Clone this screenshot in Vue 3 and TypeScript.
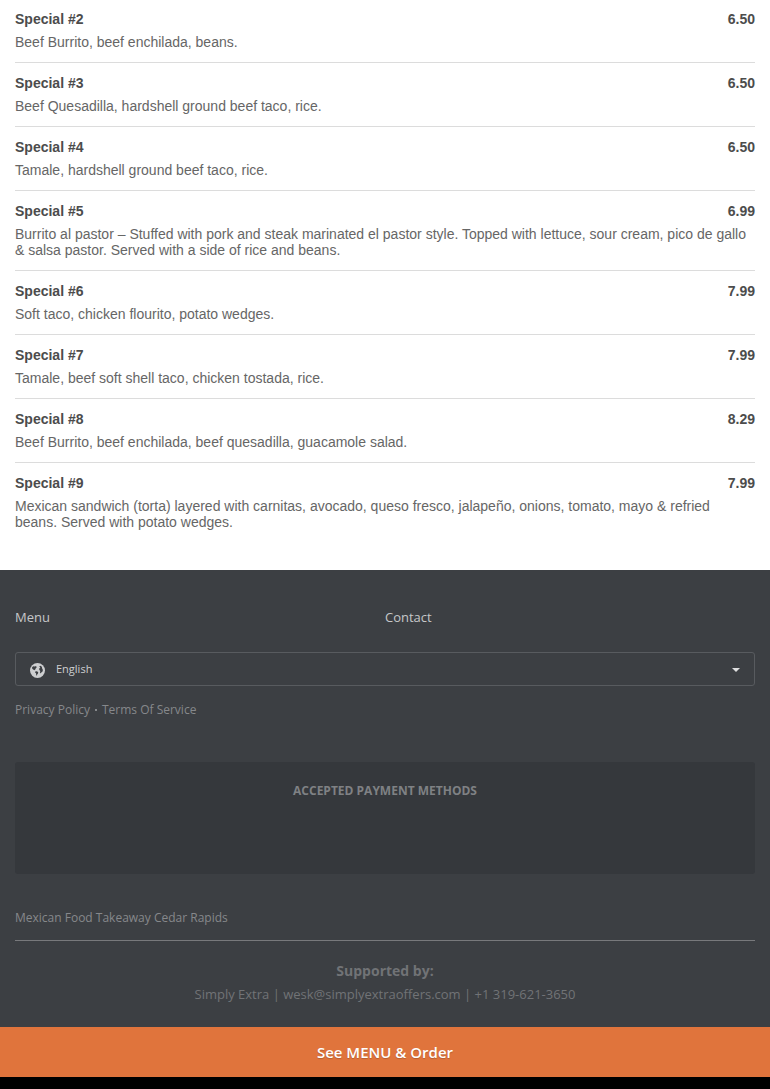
<script setup lang="ts">
import { ref } from 'vue'

interface Dish {
  name: string
  price: string
  description: string
}

const dishes: Dish[] = [
  { name: 'Special #2', price: '6.50', description: 'Beef Burrito, beef enchilada, beans.' },
  { name: 'Special #3', price: '6.50', description: 'Beef Quesadilla, hardshell ground beef taco, rice.' },
  { name: 'Special #4', price: '6.50', description: 'Tamale, hardshell ground beef taco, rice.' },
  {
    name: 'Special #5',
    price: '6.99',
    description:
      'Burrito al pastor – Stuffed with pork and steak marinated el pastor style. Topped with lettuce, sour cream, pico de gallo & salsa pastor. Served with a side of rice and beans.',
  },
  { name: 'Special #6', price: '7.99', description: 'Soft taco, chicken flourito, potato wedges.' },
  { name: 'Special #7', price: '7.99', description: 'Tamale, beef soft shell taco, chicken tostada, rice.' },
  { name: 'Special #8', price: '8.29', description: 'Beef Burrito, beef enchilada, beef quesadilla, guacamole salad.' },
  {
    name: 'Special #9',
    price: '7.99',
    description:
      'Mexican sandwich (torta) layered with carnitas, avocado, queso fresco, jalapeño, onions, tomato, mayo & refried beans. Served with potato wedges.',
  },
]

const language = ref('English')
</script>

<template>
  <div class="page">
    <main>
      <ul class="dishes">
        <li v-for="dish in dishes" :key="dish.name" class="dish">
          <div class="heading">
            <h3>{{ dish.name }}</h3>
            <span class="price">{{ dish.price }}</span>
          </div>
          <p>{{ dish.description }}</p>
        </li>
      </ul>
    </main>

    <footer class="footer">
      <nav class="nav">
        <a href="#menu">Menu</a>
        <a href="#contact">Contact</a>
      </nav>

      <div class="language">
        <svg class="globe" viewBox="0 0 16 16" aria-hidden="true">
          <circle cx="8" cy="8" r="8" fill="#cdced0" />
          <path
            d="M2.2 4.6 3.6 3.4 5.2 3.8 6.4 3.2 7.2 4.4 6.2 5.6 5.6 6.8 4.6 7.6 3.4 6.8 2.4 6ZM5.6 9 7.4 8.8 8.8 9.8 8.4 11.4 7.6 12.2 7.4 13.8 6.6 12.4 6.4 10.8 5.4 10.2ZM9.8 3.4 11.2 2.8 12.6 4 13 5.8 13.8 7.4 13.2 9.2 12 10.2 11.2 11.2 10.6 9.8 11 8.4 9.8 7.2 10 5.6 11 4.8Z"
            fill="#3c3f43"
          />
        </svg>
        <select v-model="language" aria-label="Language">
          <option>English</option>
        </select>
        <span class="caret"></span>
      </div>

      <div class="legal">
        <a href="#privacy">Privacy Policy</a>
        <span class="dot"></span>
        <a href="#terms">Terms Of Service</a>
      </div>

      <section class="payments">
        <h4>ACCEPTED PAYMENT METHODS</h4>
      </section>

      <p class="tagline">Mexican Food Takeaway Cedar Rapids</p>

      <section class="support">
        <h4>Supported by:</h4>
        <p>Simply Extra | wesk@simplyextraoffers.com | +1 319-621-3650</p>
      </section>
    </footer>

    <button type="button" class="order">See MENU &amp; Order</button>
  </div>
</template>

<style>
body {
  margin: 0;
  background: #000;
}
</style>

<style scoped>
.page {
  padding-bottom: 12px;
  background: #000;
  font-family: 'Open Sans', sans-serif;
}

h3,
h4,
p {
  margin: 0;
}

a {
  color: inherit;
  text-decoration: none;
}

main {
  padding: 0 15px 28px;
  background: #fff;
  color: #666;
  font: 14px/16px 'Liberation Sans', Arial, sans-serif;
}

.dishes {
  margin: 0;
  padding: 0;
  list-style: none;
}

.dish {
  padding: 12px 0;
}

.dish:first-child {
  padding-top: 11px;
}

.dish + .dish {
  border-top: 1px solid #dcdcdc;
}

.heading {
  display: flex;
  justify-content: space-between;
  margin-bottom: 7px;
  color: #4c4c4c;
  font-weight: bold;
}

.heading h3 {
  font-size: 14px;
}

.footer {
  padding: 37px 15px 20px;
  background: #3c3f43;
  color: #86888b;
  font-size: 12px;
  line-height: 20px;
}

.nav {
  display: grid;
  grid-template-columns: 1fr 1fr;
  color: #c6c7c9;
  font-size: 13px;
}

.language {
  position: relative;
  display: flex;
  align-items: center;
  margin-top: 25px;
}

.language select {
  width: 100%;
  height: 34px;
  padding: 0 40px;
  border: 1px solid #585b5f;
  border-radius: 3px;
  appearance: none;
  background: transparent;
  color: #cdced0;
  font: 11px/16px 'Open Sans', sans-serif;
}

.globe {
  position: absolute;
  left: 15px;
  top: 11px;
  width: 15px;
  height: 15px;
  pointer-events: none;
}

.caret {
  position: absolute;
  right: 15px;
  top: 16px;
  border: 4px solid transparent;
  border-top-color: #dedfe0;
  border-bottom: 0;
  pointer-events: none;
}

.legal {
  display: flex;
  align-items: center;
  margin-top: 14px;
}

.dot {
  width: 2px;
  height: 2px;
  margin: 0 5px;
  background: #86888b;
}

.payments {
  min-height: 93px;
  margin-top: 42px;
  padding-top: 19px;
  border-radius: 3px;
  background: #35383c;
  color: #7f8184;
  text-align: center;
}

.payments h4 {
  font-size: 12px;
}

.tagline {
  margin-top: 34px;
  padding-bottom: 12px;
  border-bottom: 1px solid #78797c;
}

.support {
  margin-top: 20px;
  color: #717376;
  font-size: 13px;
  line-height: 26px;
  text-align: center;
}

.support h4 {
  font-size: 14px;
  line-height: 20px;
}

.order {
  display: block;
  width: 100%;
  height: 50px;
  padding: 0;
  border: 0;
  background: #e0743c;
  color: #fff;
  font: 600 15px/20px 'Open Sans', sans-serif;
  text-shadow: 0 1px 1px rgba(0, 0, 0, 0.2);
}
</style>
